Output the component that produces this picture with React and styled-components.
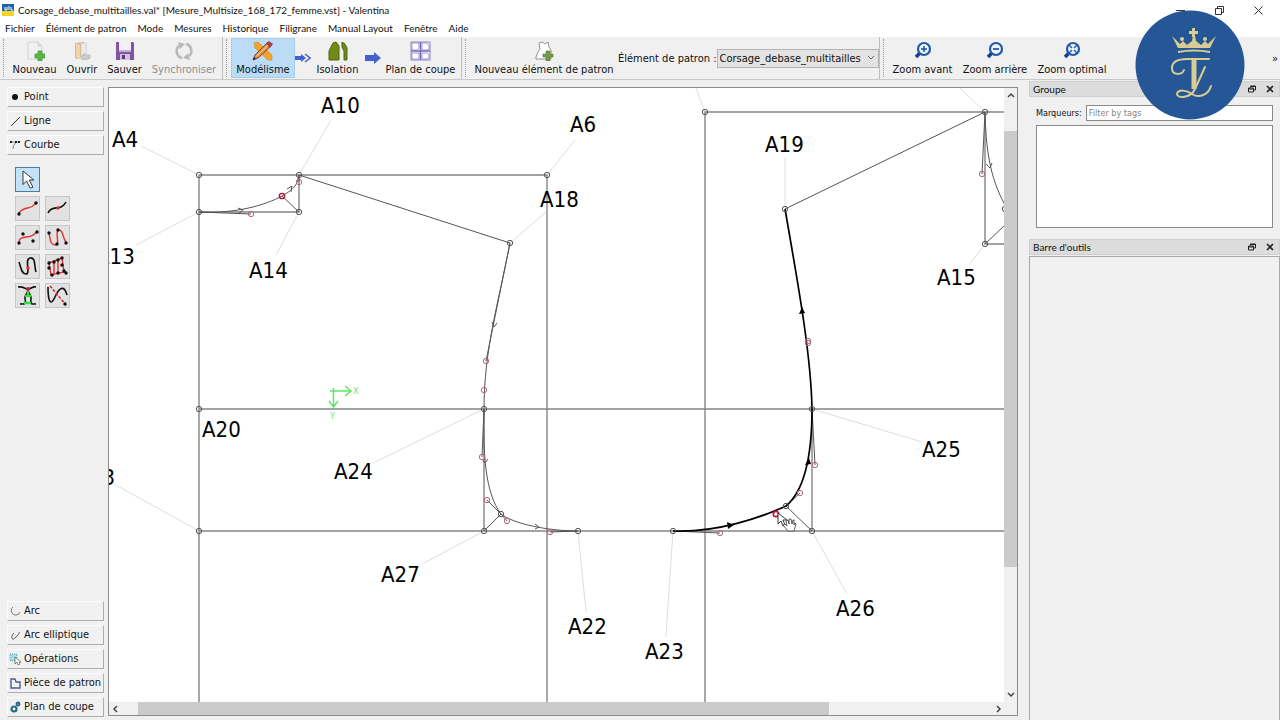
import React from "react";
import styled, { createGlobalStyle } from "styled-components";

const GlobalStyle = createGlobalStyle`
  * {
    box-sizing: border-box;
  }
  body {
    margin: 0;
    background-color: #f0f0f0;
    color: #111;
    font-family: Lato, "Open Sans", sans-serif;
    font-size: 11px;
  }
  button, input, select {
    font: inherit;
    color: inherit;
  }
`;

const uiFont = `"DejaVu Sans Condensed", "DejaVu Sans", sans-serif`;

const Window = styled.div`
  height: 100vh;
  display: flex;
  flex-direction: column;
  overflow: hidden;
  position: relative;
`;

const TitleBar = styled.header`
  display: flex;
  align-items: center;
  gap: 4px;
  height: 20px;
  flex-shrink: 0;
  padding: 0 4px 0 2px;
  background-color: white;
`;

const Title = styled.h1`
  flex: 1;
  margin: 0;
  font-size: 10px;
  line-height: 16px;
  font-weight: normal;
`;

const WindowButton = styled.button`
  display: flex;
  align-items: center;
  justify-content: center;
  width: 35px;
  height: 18px;
  padding: 0;
  border: none;
  background: none;
`;

const MenuBar = styled.nav`
  display: flex;
  align-items: flex-start;
  gap: 11px;
  height: 17px;
  flex-shrink: 0;
  padding-left: 5px;
  background-color: white;
`;

const MenuItem = styled.button`
  padding: 0;
  border: none;
  background: none;
  font-size: 10px;
  line-height: 16px;
`;

const ToolbarArea = styled.div`
  display: flex;
  height: 43px;
  flex-shrink: 0;
  border-bottom: 1px solid #c8c8c8;
  font-family: ${uiFont};
`;

const Toolbar = styled.div`
  display: flex;
  align-items: center;
  padding-right: ${(props) => props.$end || 0}px;
  border-right: 1px solid #bdbdbd;
  &:last-child {
    flex: 1;
    border-right: none;
    padding-right: 2px;
  }
`;

const Handle = styled.div`
  width: 8px;
  height: 38px;
  flex-shrink: 0;
  &::before {
    content: "";
    display: block;
    height: 100%;
    margin-left: 3px;
    border-left: 1px dotted #999;
  }
`;

const ToolButton = styled.button`
  display: flex;
  flex-direction: column;
  align-items: center;
  justify-content: space-between;
  width: ${(props) => props.$width}px;
  height: 40px;
  padding: 2px 0 0;
  border: 1px solid ${(props) => (props.$active ? "#a4cdeb" : "transparent")};
  background-color: ${(props) => (props.$active ? "#bbdcf4" : "transparent")};
  color: ${(props) => (props.disabled ? "#8e8e8e" : "#111")};
  font-size: 11px;
  line-height: 15px;
  white-space: nowrap;
`;

const StepArrow = styled.span`
  display: flex;
  justify-content: center;
  width: ${(props) => props.$width}px;
`;

const PieceLabel = styled.label`
  white-space: nowrap;
`;

const SelectBox = styled.div`
  position: relative;
  display: flex;
  align-items: center;
  width: 162px;
  svg {
    position: absolute;
    right: 4px;
    pointer-events: none;
  }
`;

const PieceSelect = styled.select`
  appearance: none;
  width: 100%;
  height: 19px;
  padding: 0 12px 0 2px;
  border: 1px solid #b4b4b4;
  border-radius: 0;
  background-color: #e3e3e3;
`;

const More = styled.button`
  margin-left: auto;
  padding: 0;
  border: none;
  background: none;
`;

const Workspace = styled.div`
  flex: 1;
  min-height: 0;
  display: flex;
`;

const Sidebar = styled.aside`
  display: flex;
  flex-direction: column;
  gap: 4px;
  width: 108px;
  flex-shrink: 0;
  padding: 7px 4px 3px 7px;
  font-family: ${uiFont};
`;

const SectionButton = styled.button`
  display: flex;
  align-items: center;
  gap: 3px;
  height: 20px;
  flex-shrink: 0;
  padding: 0 0 0 1px;
  border: 1px solid;
  border-color: #fbfbfb #adadad #adadad #fbfbfb;
  background-color: #f1f1f1;
  line-height: 16px;
  white-space: nowrap;
  svg {
    flex-shrink: 0;
  }
`;

const ToolGrid = styled.div`
  flex: 1;
  display: grid;
  grid-template-columns: 25px 25px;
  grid-auto-rows: 25px;
  gap: 4px 5px;
  padding: 8px;
`;

const CurveTool = styled.button`
  display: flex;
  align-items: center;
  justify-content: center;
  width: 25px;
  height: 25px;
  padding: 0;
  border: 1px solid ${(props) => (props.$active ? "#4f7d9e" : "#c6c6c6")};
  background-color: ${(props) => (props.$active ? "#c4e2f5" : "#e2e2e2")};
  grid-column: ${(props) => (props.$active ? "1 / -1" : "auto")};
`;

const CanvasFrame = styled.main`
  flex: 1;
  min-width: 0;
  display: grid;
  grid-template-columns: minmax(0, 1fr) 13px;
  grid-template-rows: minmax(0, 1fr) 13px;
  margin: 7px 11px 4px 0;
  border: 1px solid #8c8c8c;
  background-color: #f0f0f0;
`;

const Drawing = styled.svg`
  width: 100%;
  height: 100%;
  background-color: white;
  font-family: ${uiFont};
  font-size: 22px;
`;

const ScrollBar = styled.div`
  display: flex;
  flex-direction: ${(props) => (props.$vertical ? "column" : "row")};
`;

const ScrollArrow = styled.button`
  display: flex;
  align-items: center;
  justify-content: center;
  flex: 0 0 13px;
  padding: 0;
  border: none;
  background: none;
`;

const Gap = styled.div`
  flex: ${(props) => props.$size};
`;

const Thumb = styled.div`
  flex: ${(props) => props.$size};
  background-color: #cbcbcb;
`;

const Docks = styled.aside`
  display: flex;
  flex-direction: column;
  width: 251px;
  flex-shrink: 0;
  padding-top: 1px;
`;

const DockTitle = styled.div`
  display: flex;
  align-items: center;
  gap: 10px;
  height: 16px;
  flex-shrink: 0;
  padding: 0 5px 0 3px;
  border: 1px solid #cfcfcf;
  background-color: #dcdcdc;
  h2 {
    flex: 1;
    margin: 0;
    font-size: 10px;
    line-height: 14px;
    font-weight: normal;
  }
`;

const DockButton = styled.button`
  display: flex;
  padding: 0;
  border: none;
  background: none;
`;

const GroupBody = styled.div`
  display: flex;
  flex-direction: column;
  gap: 4px;
  padding: 8px 7px 11px;
`;

const FilterRow = styled.div`
  display: flex;
  align-items: center;
  gap: 4px;
  font-family: ${uiFont};
  font-size: 9px;
`;

const FilterInput = styled.input`
  flex: 1;
  min-width: 0;
  height: 16px;
  padding: 0 2px;
  border: 1px solid #8a8a8a;
  border-radius: 0;
  background-color: white;
  &::placeholder {
    color: #858585;
  }
`;

const GroupList = styled.div`
  height: 103px;
  border: 1px solid #8a8a8a;
  background-color: white;
`;

const OptionsBody = styled.div`
  flex: 1;
  margin-top: 1px;
  border: 1px solid #a9a9a9;
  border-bottom: none;
`;

const Watermark = styled.svg`
  position: absolute;
  top: 10px;
  right: 35px;
  width: 110px;
  height: 110px;
`;

const AppIcon = () => (
  <svg width="12" height="12" viewBox="0 0 12 12">
    <rect width="12" height="7" fill="#1c62ad" />
    <rect y="7" width="12" height="5" fill="#f5d327" />
    <path d="M3 3v3h2V3M7 6V2M9 3v3h2" fill="none" stroke="#fff" />
  </svg>
);

const NewIcon = () => (
  <svg width="20" height="20" viewBox="0 0 20 20">
    <path d="M3 1h10l4 4v13H3z" fill="#f0f1f2" stroke="#cfd2d4" />
    <path d="M13 1v4h4" fill="#dcdfe1" stroke="#cfd2d4" />
    <path d="M13 10h4v3h3v4h-3v3h-4v-3h-3v-4h3z" fill="#5bb83e" stroke="#3c9330" strokeWidth="0.7" />
  </svg>
);

const OpenIcon = () => (
  <svg width="20" height="20" viewBox="0 0 20 20">
    <path d="M3 2l9-1v14l-7 3-2-1z" fill="#d9b98a" />
    <path d="M4 2l4 2v14l-4-2z" fill="#f0d5a8" />
    <path d="M9 2h5v11h-3l-2 4z" fill="#ececec" stroke="#c3c3c3" strokeWidth="0.6" />
    <path d="M9 18c1-4 4-5 9-4v3c-2 2-6 2-9 1z" fill="#c9ccd0" stroke="#a8abae" strokeWidth="0.6" />
  </svg>
);

const SaveIcon = () => (
  <svg width="20" height="20" viewBox="0 0 20 20">
    <path d="M1 1h17l1 1v17H1z" fill="#8353a5" />
    <rect x="4" y="1" width="12" height="10" fill="#f2eef5" />
    <path d="M4 10h12" stroke="#b59ac8" strokeWidth="1.5" />
    <rect x="5" y="13" width="10" height="6" fill="#cfc3da" />
    <rect x="7" y="14" width="3" height="4" fill="#5d3680" />
  </svg>
);

const SyncIcon = () => (
  <svg width="20" height="20" viewBox="0 0 20 20">
    <path d="M8 17A7 7 0 0 1 5 5M12 3a7 7 0 0 1 3 12" fill="none" stroke="#b9b9b9" strokeWidth="2.600" />
    <path d="M4 1l7 2-5 5zM16 19l-7-2 5-5z" fill="#b9b9b9" />
  </svg>
);

const DraftIcon = () => (
  <svg width="22" height="20" viewBox="0 0 22 20">
    <path d="M2 2l4-1 14 13v5h-4L3 7z" fill="#f2a32b" stroke="#d98618" strokeWidth="0.6" />
    <path d="M1 19l2-5L16 1l4 3L6 17z" fill="#e8964c" stroke="#7d3c36" />
    <path d="M14 3l3-3 4 3-3 4z" fill="#a64150" />
    <path d="M1 19l1-3 2 2z" fill="#33221e" />
    <path d="M5 15L16 4" stroke="#f5c79c" />
  </svg>
);

const IsolationIcon = () => (
  <svg width="20" height="20" viewBox="0 0 20 20">
    <path d="M1 19V10l2-4 2-4 3-1 3 4v14z" fill="#738b14" stroke="#4e6410" />
    <path d="M14 1l3 2 2 4v12h-3v-9l-2-4z" fill="#738b14" stroke="#4e6410" />
  </svg>
);

const LayoutIcon = () => (
  <svg width="21" height="20" viewBox="0 0 21 20">
    <rect x="1" y="1" width="19" height="18" fill="#f5f4fc" stroke="#8d83c3" />
    <path d="M2 2h7v5l-2 2H2zM12 2h5l2 3v3l-2 1h-5zM2 12h7v6H2zM12 12h5l2 2v3l-2 1h-5z" fill="#fff" stroke="#8d83c3" strokeWidth="0.800" />
    <path d="M10.500 1v18M1 10h19" stroke="#776bb8" strokeWidth="1.500" />
  </svg>
);

const PieceIcon = () => (
  <svg width="20" height="20" viewBox="0 0 20 20">
    <path d="M5 2l3-1 3 2 3-2 1 5 2 3v9H2v-2l2-5 2-3z" fill="#fff" stroke="#777" strokeWidth="0.8" />
    <path d="M12 10h4v3h3v3h-3v4h-4v-4H9v-3h3z" fill="#729b49" stroke="#547d35" strokeWidth="0.6" />
  </svg>
);

const ZoomIcon = ({ kind }) => (
  <svg width="18" height="18" viewBox="0 0 18 18">
    <path d="M6 12L2 16" stroke="#173f91" strokeWidth="3.500" />
    <circle cx="10" cy="8" r="6" fill="#e9f4fd" stroke="#2258a8" strokeWidth="2.200" />
    {kind === "in" && <path d="M7 8h6M10 5v6" stroke="#1d4c9e" strokeWidth="1.500" />}
    {kind === "out" && <path d="M7 8h6" stroke="#1d4c9e" strokeWidth="1.700" />}
    {kind === "fit" && (
      <path d="M6 4l3 3M14 4l-3 3M6 12l3-3M14 12l-3-3" stroke="#2258a8" strokeWidth="1.400" />
    )}
  </svg>
);

const CursorShape = () => (
  <path d="M0 0v15l4-4 4 8 3-1-4-8h5z" fill="#fff" stroke="#222" />
);

const curveTools = [
  {
    label: "Sélection",
    active: true,
    art: (
      <g transform="translate(7 3) scale(0.9)">
        <CursorShape />
      </g>
    ),
  },
  { label: "Courbe simple", red: "M3 16C8 8 16 14 20 5", dots: [[3, 17], [20, 6]] },
  { label: "Segment de courbe", black: "M2 16C6 7 15 15 20 5", redDots: [[12, 11]] },
  { label: "Bézier", red: "M3 16C3 8 17 14 20 6", dots: [[3, 17], [7, 8], [17, 15], [21, 6]] },
  { label: "Courbe complexe", red: "M3 8C5 13 3 18 9 19S8 4 13 4 16 13 21 17", dots: [[3, 7], [12, 4], [11, 18], [20, 17]] },
  { label: "Segment complexe", black: "M3 7C5 12 5 19 10 19S8 4 14 3 18 11 20 17", redDots: [[12, 13]] },
  {
    label: "Bézier complexe",
    red: "M3 8L16 3 18 17 5 20zM8 6V19M12 5V18",
    dots: [[3, 8], [8, 7], [12, 5], [16, 3], [3, 13], [16, 10], [18, 16], [12, 18], [6, 20], [20, 18]],
  },
  {
    label: "Intersection de courbes",
    black: "M2 3C8 2 8 5 12 5S16 2 20 3M12 5C12 10 9 10 9 14S11 18 8 20H4M12 5C12 10 15 10 15 14S14 18 16 20H20",
    art: (
      <>
        <path d="M12 7v4M9 12h6M8 19h7" stroke="#35d845" strokeWidth="2.500" />
        <circle cx="12" cy="5" r="2" fill="#c51f50" />
      </>
    ),
  },
  {
    label: "Courbe et axe",
    black: "M2 3C2 19 5 22 9 13S18 0 21 11",
    art: (
      <path d="M4 2L20 21" stroke="#d92333" strokeWidth="1.500" strokeDasharray="3 1.500" />
    ),
    dots: [[19, 20]],
  },
];

const CurveToolIcon = ({ tool }) => (
  <svg width="23" height="23" viewBox="0 0 23 23" fill="none">
    {tool.red && <path d={tool.red} stroke="#df3434" strokeWidth="1.400" />}
    {tool.black && <path d={tool.black} stroke="#111" strokeWidth="1.600" />}
    {tool.art}
    {(tool.dots || []).map(([x, y]) => (
      <circle key={`${x}-${y}`} cx={x} cy={y} r="1.700" fill="#111" />
    ))}
    {(tool.redDots || []).map(([x, y]) => (
      <circle key={`${x}-${y}`} cx={x} cy={y} r="1.700" fill="#e02b2b" />
    ))}
  </svg>
);

const sectionArt = {
  Point: <circle cx="6" cy="6" r="3" fill="#111" />,
  Ligne: <path d="M2 11L11 2" stroke="#333" />,
  Courbe: (
    <>
      <path d="M2 3h9M4 10c0-3 1-5 4-7" stroke="#666" strokeWidth="0.8" fill="none" />
      <path d="M1 2h2v2H1zM9 2h2v2H9zM6 2h2v2H6z" fill="#222" />
    </>
  ),
  Arc: <path d="M4 2a4.500 4.500 0 1 0 7 5" stroke="#777" fill="none" />,
  "Arc elliptique": <path d="M5 4C1 8 3 12 6 9S11 4 10 3" stroke="#555" fill="none" />,
  Opérations: (
    <>
      <rect x="1" y="1" width="7" height="7" fill="#a9dbe2" stroke="#58aab8" strokeDasharray="1 1" />
      <path d="M6 4v7l2-2 1 3 2-1-1-2h2z" fill="#fff" stroke="#555" strokeWidth="0.7" />
    </>
  ),
  "Pièce de patron": (
    <path d="M2 2h4l1 3h4v6H2z" fill="#f0f2fa" stroke="#4f5a8c" strokeWidth="1.400" />
  ),
  "Plan de coupe": (
    <>
      <circle cx="5" cy="8" r="2.500" fill="none" stroke="#1f6d8a" strokeWidth="2.200" />
      <circle cx="9" cy="3" r="1.500" fill="none" stroke="#2b5f85" strokeWidth="1.800" />
    </>
  ),
};

const Section = ({ name }) => (
  <SectionButton>
    <svg width="12" height="12" viewBox="0 0 12 12">
      {sectionArt[name]}
    </svg>
    {name}
  </SectionButton>
);

const Chevron = ({ d, size = 8 }) => (
  <svg width={size} height={size} viewBox="0 0 8 8">
    <path d={d} fill="none" stroke="#444" strokeWidth="1.500" />
  </svg>
);

const labels = [
  ["A4", 112, 147],
  ["A10", 321, 113],
  ["A6", 570, 132],
  ["A18", 540, 207],
  ["A13", 96, 264],
  ["A14", 249, 278],
  ["A20", 202, 437],
  ["A24", 334, 479],
  ["A3", 89, 485],
  ["A27", 381, 582],
  ["A22", 568, 634],
  ["A23", 645, 659],
  ["A26", 836, 616],
  ["A25", 922, 457],
  ["A15", 937, 285],
  ["A19", 765, 152],
];

const leaders =
  "M141 146L199 175M331 120L299 175M575 140L547 175M546 212L510 243M136 245L199 212M276 255L299 212" +
  "M373 463L484 409M114 484L199 531M424 563L484 531M586 612L578 531M666 637L673 531M847 594L812 531" +
  "M922 442L812 409M969 265L985 244M785 158V209M696 88L705 112M960 88L985 112";

const points = [
  [199, 175], [299, 175], [547, 175], [199, 212], [299, 212], [510, 243],
  [199, 409], [484, 409], [199, 531], [484, 531], [501, 514], [578, 531],
  [673, 531], [812, 531], [786, 506], [812, 409], [785, 209], [705, 112],
  [985, 112], [985, 244], [1005, 209],
];

const controls = [
  [299, 182], [251, 214], [282, 196], [486, 361], [484, 390], [482, 457],
  [487, 500], [507, 521], [550, 532], [720, 533], [800, 493], [815, 465],
  [808, 341], [808, 343], [982, 174],
];

const Pattern = () => (
  <Drawing role="img" aria-label="Corsage_debase_multitailles">
    <g transform="translate(-109 -88)" fill="none">
      <path d={leaders} stroke="#dedede" />
      <g stroke="#858585" strokeWidth="1.400">
        <path d="M199 175H547V702M199 175V702M199 409H1005M199 531H1005M705 702V112H1005M199 212H299V175" />
        <path d="M484 409V531M812 409V531M985 112V244H1005" />
      </g>
      <g stroke="#555">
        <path d="M299 175L510 243M785 209L985 112M282 196L299 212M484 531L501 514M786 506L812 531M985 244L1005 225" />
        <path d="M199 212L251 214M299 175V182M510 243L486 361M484 409L482 457M501 514L487 500M501 514L507 521M550 532L578 531M673 531L720 533M812 409L815 465M786 506L800 493M985 112L982 174" />
        <path d="M199 212C235 214 266 205 282 196S297 182 299 175" />
        <path d="M510 243C499 300 484 350 484 409C483 453 485 493 501 514C512 523 546 531 578 531" />
        <path d="M985 112C986 147 989 176 1005 205" />
        <path d="M238 208l5 2-4 3M287 189l5-3-1 6M492 322l2 5 3-4M482 459l3 4 3-4M535 524l4 3-4 2M986 164l4 4 2-5" />
      </g>
      <path d="M673 531C717 533 762 517 786 506C805 490 812 456 812 409C811 356 799 289 785 209" stroke="#000" strokeWidth="1.700" />
      <path d="M727 522l7 3-6 4zM805 465l4-7 2 6zM799 314l3-7 3 6z" fill="#000" />
      {points.map(([x, y]) => (
        <circle key={`${x}-${y}`} cx={x} cy={y} r="2.700" stroke="#555" />
      ))}
      {controls.map(([x, y]) => (
        <circle key={`${x}-${y}`} cx={x} cy={y} r="2.700" stroke="#b8657a" />
      ))}
      <circle cx="282" cy="196" r="2.700" stroke="#a61f38" strokeWidth="1.300" />
      <circle cx="776" cy="514" r="2.700" stroke="#d1143b" strokeWidth="1.700" />
      <g stroke="#5fe868" strokeWidth="1.500">
        <path d="M330 391h20M333.500 388v19M345 386l6 5-6 5M329 401l4.500 6 4.500-6" />
      </g>
      <g fill="#6fe577" fontSize="9">
        <text x="353" y="394">X</text>
        <text x="330" y="419">Y</text>
      </g>
      <g fill="#000">
        {labels.map(([name, x, y]) => (
          <text key={name} x={x} y={y}>
            {name}
          </text>
        ))}
      </g>
      <path d="M778 513v11l3-3 2 5 2-1-2-5h4z" fill="#fff" stroke="#222" strokeWidth="0.900" />
      <path d="M788 531l-5-6 2-1 2 2-1-5 2-1 1 4v-5h2l1 5 1-4h1v5l1-2 1 1-2 7z" fill="#fff" stroke="#333" strokeWidth="0.800" />
    </g>
  </Drawing>
);

const Dock = ({ title }) => (
  <DockTitle>
    <h2>{title}</h2>
    <DockButton aria-label="Détacher">
      <svg width="8" height="8" viewBox="0 0 8 8">
        <path d="M2.500 2.500V1h5v4H5.500M.5 3h5v4h-5zM.5 4h5M2.500 1.500h5" fill="none" stroke="#222" />
      </svg>
    </DockButton>
    <DockButton aria-label="Fermer">
      <svg width="8" height="8" viewBox="0 0 8 8">
        <path d="M1 1l6 6M7 1L1 7" stroke="#222" strokeWidth="1.600" />
      </svg>
    </DockButton>
  </DockTitle>
);

const menus = [
  "Fichier", "Élément de patron", "Mode", "Mesures", "Historique",
  "Filigrane", "Manual Layout", "Fenêtre", "Aide",
];

const App = () => {
  return (
    <Window>
      <GlobalStyle />
      <TitleBar>
        <AppIcon />
        <Title>
          Corsage_debase_multitailles.val* [Mesure_Multisize_168_172_femme.vst] - Valentina
        </Title>
        <WindowButton aria-label="Réduire">
          <svg width="9" height="9">
            <path d="M0 4.500h9" stroke="#333" />
          </svg>
        </WindowButton>
        <WindowButton aria-label="Restaurer">
          <svg width="9" height="9">
            <path d="M.5 2.500h6v6h-6zM2.500 2.500v-2h6v6h-2" fill="none" stroke="#333" />
          </svg>
        </WindowButton>
        <WindowButton aria-label="Fermer">
          <svg width="9" height="9">
            <path d="M.5.5l8 8M8.500.5l-8 8" stroke="#333" />
          </svg>
        </WindowButton>
      </TitleBar>
      <MenuBar>
        {menus.map((menu) => (
          <MenuItem key={menu}>{menu}</MenuItem>
        ))}
      </MenuBar>

      <ToolbarArea>
        <Toolbar>
          <Handle />
          <ToolButton $width={53}>
            <NewIcon />
            Nouveau
          </ToolButton>
          <ToolButton $width={42}>
            <OpenIcon />
            Ouvrir
          </ToolButton>
          <ToolButton $width={43}>
            <SaveIcon />
            Sauver
          </ToolButton>
          <ToolButton $width={76} disabled>
            <SyncIcon />
            Synchroniser
          </ToolButton>
        </Toolbar>
        <Toolbar $end={2}>
          <Handle />
          <ToolButton $width={64} $active>
            <DraftIcon />
            Modélisme
          </ToolButton>
          <StepArrow $width={16}>
            <svg width="16" height="10" viewBox="0 0 16 10">
              <path d="M0 3h6V1l5 4-5 4V7H0z" fill="#4262cf" />
              <path d="M10 1l5 4-5 4" fill="none" stroke="#4262cf" strokeWidth="1.500" />
            </svg>
          </StepArrow>
          <ToolButton $width={53}>
            <IsolationIcon />
            Isolation
          </ToolButton>
          <StepArrow $width={18}>
            <svg width="16" height="12" viewBox="0 0 16 12">
              <path d="M0 3h9V0l7 6-7 6V9H0z" fill="#4262cf" />
            </svg>
          </StepArrow>
          <ToolButton $width={77}>
            <LayoutIcon />
            Plan de coupe
          </ToolButton>
        </Toolbar>
        <Toolbar>
          <Handle />
          <ToolButton $width={148}>
            <PieceIcon />
            Nouveau élément de patron
          </ToolButton>
          <PieceLabel htmlFor="piece">Élément de patron :</PieceLabel>
          <SelectBox>
            <PieceSelect id="piece">
              <option>Corsage_debase_multitailles</option>
            </PieceSelect>
            <svg width="8" height="6" viewBox="0 0 8 6">
              <path d="M1 1l3 3 3-3" fill="none" stroke="#666" />
            </svg>
          </SelectBox>
        </Toolbar>
        <Toolbar>
          <Handle />
          <ToolButton $width={70}>
            <ZoomIcon kind="in" />
            Zoom avant
          </ToolButton>
          <ToolButton $width={75}>
            <ZoomIcon kind="out" />
            Zoom arrière
          </ToolButton>
          <ToolButton $width={79}>
            <ZoomIcon kind="fit" />
            Zoom optimal
          </ToolButton>
          <More aria-label="Plus d'outils">»</More>
        </Toolbar>
      </ToolbarArea>

      <Workspace>
        <Sidebar>
          <Section name="Point" />
          <Section name="Ligne" />
          <Section name="Courbe" />
          <ToolGrid>
            {curveTools.map((tool) => (
              <CurveTool key={tool.label} aria-label={tool.label} $active={tool.active}>
                <CurveToolIcon tool={tool} />
              </CurveTool>
            ))}
          </ToolGrid>
          <Section name="Arc" />
          <Section name="Arc elliptique" />
          <Section name="Opérations" />
          <Section name="Pièce de patron" />
          <Section name="Plan de coupe" />
        </Sidebar>

        <CanvasFrame>
          <Pattern />
          <ScrollBar $vertical>
            <ScrollArrow aria-label="Haut">
              <Chevron d="M1 6l3-3 3 3" />
            </ScrollArrow>
            <Gap $size={30} />
            <Thumb $size={435} />
            <Gap $size={122} />
            <ScrollArrow aria-label="Bas">
              <Chevron d="M1 2l3 3 3-3" />
            </ScrollArrow>
          </ScrollBar>
          <ScrollBar>
            <ScrollArrow aria-label="Gauche">
              <Chevron d="M5 1L2 4l3 3" />
            </ScrollArrow>
            <Gap $size={16} />
            <Thumb $size={691} />
            <Gap $size={162} />
            <ScrollArrow aria-label="Droite">
              <Chevron d="M3 1l3 3-3 3" />
            </ScrollArrow>
          </ScrollBar>
        </CanvasFrame>

        <Docks>
          <Dock title="Groupe" />
          <GroupBody>
            <FilterRow>
              <label htmlFor="tags">Marqueurs:</label>
              <FilterInput id="tags" placeholder="Filter by tags" />
            </FilterRow>
            <GroupList />
          </GroupBody>
          <Dock title="Barre d'outils" />
          <OptionsBody />
        </Docks>
      </Workspace>

      <Watermark viewBox="0 0 110 110">
        <circle cx="55" cy="55" r="54.500" fill="#255695" />
        <g fill="#d8cc94">
          <path d="M37 26l8 8 3-3 4 4 5-4 1-5h2l1 5 5 4 4-4 3 3 8-8-6 12H43z" />
          <path d="M57 18h3v3h3v3h-3v3h-3v-3h-3v-3h3z" />
          <circle cx="47" cy="29" r="2" />
          <circle cx="70" cy="29" r="2" />
        </g>
        <path d="M43 42Q59 39 75 42" fill="none" stroke="#d8cc94" strokeWidth="2" />
        <g fill="none" stroke="#d8cc94" strokeLinecap="round">
          <path d="M74 49H52C40 49 37 53 37 58C37 66 47 65 49 60" strokeWidth="2" />
          <path d="M59 50V79" strokeWidth="5" strokeLinecap="butt" />
          <path d="M70 57L60 79C56 88 42 89 42 84C43 79 52 80 57 84C63 88 73 86 76 76" strokeWidth="2" />
        </g>
      </Watermark>
    </Window>
  );
};

export default App;
